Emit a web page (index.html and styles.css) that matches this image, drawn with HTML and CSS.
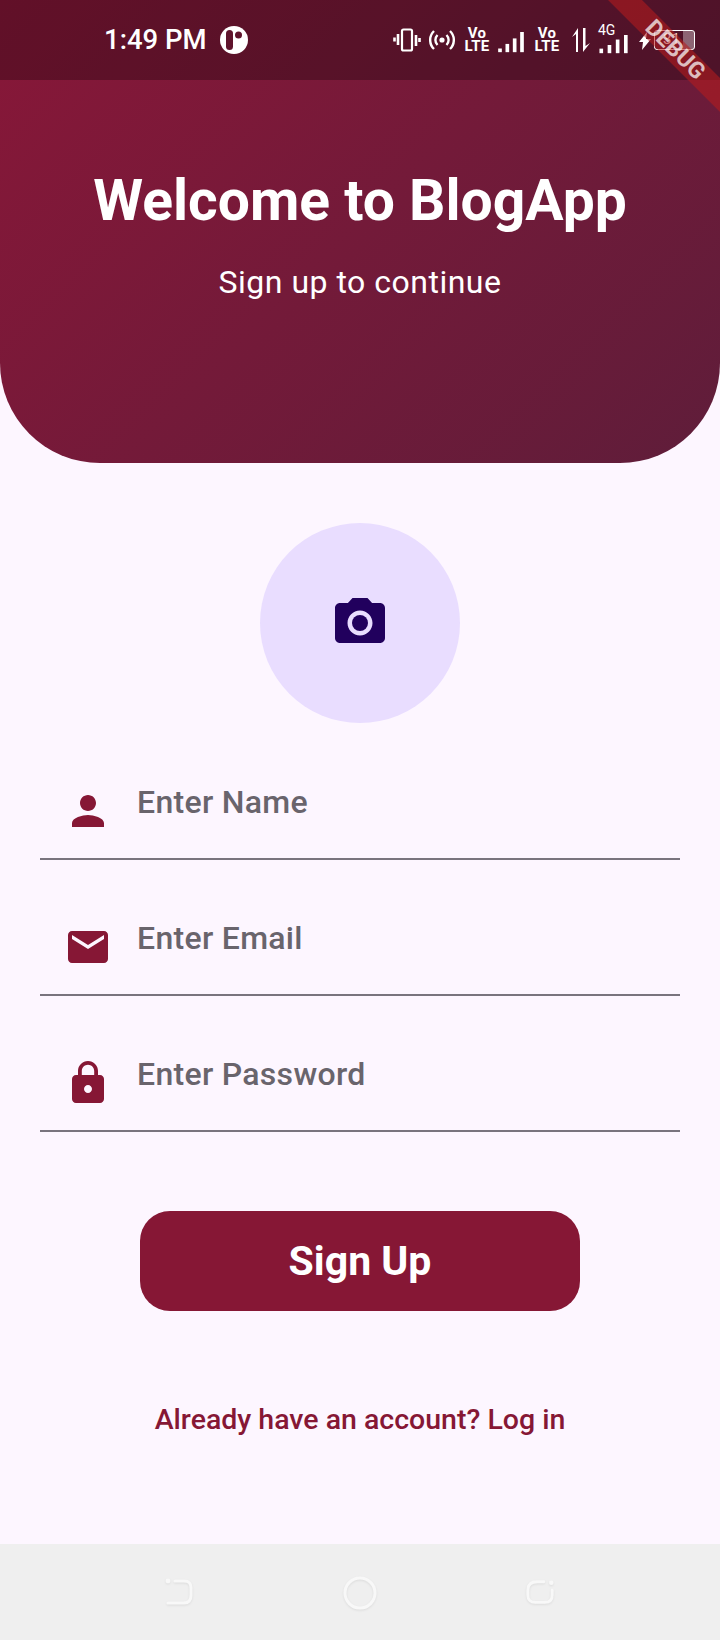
FILE: index.html
```html
<!DOCTYPE html>
<html lang="en">
<head>
<meta charset="utf-8">
<title>BlogApp Sign Up</title>
<link rel="stylesheet" href="styles.css">
</head>
<body>
<div class="page">
  <header class="hero">
    <div class="status">
      <div class="status-left">
        <span class="clock">1:49 PM</span>
        <svg class="app-dot" viewBox="0 0 28 28"><circle cx="14" cy="14" r="14" fill="#fff"/><rect x="6" y="4" width="7" height="20" rx="3.5" fill="#5f132c"/><circle cx="18.5" cy="9" r="3.5" fill="#5f132c"/></svg>
      </div>
      <div class="status-right">
        <svg class="i-vib" viewBox="0 0 28 24" fill="none" stroke="#fff"><rect x="9" y="1.500" width="10" height="21" rx="1.500" stroke-width="2.200"/><path d="M5 6v11M1.500 9.500v4M23 7v11M26.500 10v4" stroke-width="2.600"/></svg>
        <svg class="i-hot" viewBox="0 0 26 24" fill="none" stroke="#fff" stroke-width="2.400"><circle cx="13" cy="12" r="2.600" fill="#fff" stroke="none"/><path d="M8.500 7a7 7 0 0 0 0 10M17.500 7a7 7 0 0 1 0 10M5 3a12.500 12.500 0 0 0 0 18M21 3a12.500 12.500 0 0 1 0 18"/></svg>
        <div class="volte"><span>Vo</span><span>LTE</span></div>
        <svg class="i-sig" viewBox="0 0 28 24" fill="#fff"><rect x="0" y="18" width="4" height="4"/><rect x="8" y="13" width="4" height="9"/><rect x="16" y="7" width="4" height="15"/><rect x="24" y="0" width="4" height="22"/></svg>
        <div class="volte"><span>Vo</span><span>LTE</span></div>
        <svg class="i-arrows" viewBox="0 0 18 24" fill="#fff"><path d="M4 24V6L0 9 6 0v24zM11 0h2.500v18L18 15l-7 9z"/></svg>
        <div class="sig-4g">
          <span class="tag-4g">4G</span>
          <svg class="i-sig-small" viewBox="0 0 32 22" fill="#fff"><rect x="0" y="15" width="4" height="5"/><rect x="9" y="11" width="4" height="9"/><rect x="18" y="5" width="4" height="15"/><rect x="27" y="0" width="4" height="20"/></svg>
        </div>
        <svg class="i-bolt" viewBox="0 0 12 18" fill="#fff"><path d="M8 0 0 10h4l-1 8 9-11H7z"/></svg>
        <div class="battery"><span class="batt-level">31</span></div>
      </div>
    </div>
    <div class="hero-copy">
      <h1 class="title">Welcome to BlogApp</h1>
      <p class="subtitle">Sign up to continue</p>
    </div>
  </header>

  <main class="form">
    <div class="avatar">
      <svg class="camera" viewBox="0 0 24 24" fill="#21005d"><path d="M9 2 7.170 4H4c-1.100 0-2 .9-2 2v12c0 1.100.9 2 2 2h16c1.100 0 2-.9 2-2V6c0-1.100-.9-2-2-2h-3.170L15 2H9zm3 15c-2.760 0-5-2.240-5-5s2.240-5 5-5 5 2.240 5 5-2.240 5-5 5z"/><circle cx="12" cy="12" r="3.200"/></svg>
    </div>
    <div class="fields">
      <div class="field">
        <svg class="field-icon" viewBox="0 0 24 24"><path d="M12 12c2.210 0 4-1.790 4-4s-1.790-4-4-4-4 1.790-4 4 1.790 4 4 4zm0 2c-2.670 0-8 1.340-8 4v2h16v-2c0-2.660-5.330-4-8-4z"/></svg>
        <span class="hint">Enter Name</span>
      </div>
      <div class="field">
        <svg class="field-icon" viewBox="0 0 24 24"><path d="M20 4H4c-1.100 0-1.990.9-1.990 2L2 18c0 1.100.9 2 2 2h16c1.100 0 2-.9 2-2V6c0-1.100-.9-2-2-2zm0 4-8 5-8-5V6l8 5 8-5v2z"/></svg>
        <span class="hint">Enter Email</span>
      </div>
      <div class="field">
        <svg class="field-icon" viewBox="0 0 24 24"><path d="M18 8h-1V6c0-2.760-2.240-5-5-5S7 3.240 7 6v2H6c-1.100 0-2 .9-2 2v10c0 1.100.9 2 2 2h12c1.100 0 2-.9 2-2V10c0-1.100-.9-2-2-2zm-6 9c-1.100 0-2-.9-2-2s.9-2 2-2 2 .9 2 2-.9 2-2 2zm3.100-9H8.900V6c0-1.710 1.390-3.100 3.100-3.100 1.710 0 3.100 1.390 3.100 3.100v2z"/></svg>
        <span class="hint">Enter Password</span>
      </div>
    </div>
    <button class="signup" type="button">Sign Up</button>
    <a class="login" href="#">Already have an account? Log in</a>
  </main>

  <nav class="navbar">
    <svg class="nav-icon" viewBox="0 0 30 30"><circle cx="3" cy="3" r="2.400" class="dot"/><path d="M10 3h9c5 0 7 2 7 7v7c0 5-2 8-7 8H3" class="stroke"/></svg>
    <svg class="nav-icon nav-home" viewBox="0 0 34 34"><circle cx="17" cy="17" r="15" class="stroke"/></svg>
    <svg class="nav-icon" viewBox="0 0 32 30"><path d="M20 3H13C6 3 3 6 3 12v5c0 5 3 8 8 8h10c6 0 8-3 8-8v-5" class="stroke"/><circle cx="28" cy="4" r="2.400" class="dot"/></svg>
  </nav>

  <div class="debug-banner">DEBUG</div>
</div>
</body>
</html>
```
FILE: styles.css
```css
* { box-sizing: border-box; }
html, body { margin: 0; padding: 0; }
body { font-family: Roboto, "Noto Sans", sans-serif; }

.page {
  position: relative;
  width: 720px;
  height: 1640px;
  overflow: hidden;
  display: flex;
  flex-direction: column;
  background: #fdf6ff;
}

.hero {
  height: 463px;
  flex: none;
  background: linear-gradient(135deg, #881738 0%, #5f1d3a 100%);
  border-radius: 0 0 100px 100px;
  color: #fff;
}

.status {
  height: 80px;
  background: rgba(0, 0, 0, 0.28);
  display: flex;
  align-items: center;
  justify-content: space-between;
  padding: 0 25px 0 104px;
}
.status-left { display: flex; align-items: center; gap: 13px; }
.clock { font-size: 27.500px; font-weight: 500; line-height: 1; }
.app-dot { width: 28px; height: 28px; display: block; }
.status-right { display: flex; align-items: center; }
.status-right svg { display: block; flex: none; }

.i-vib { width: 28px; height: 24px; }
.i-hot { width: 26px; height: 24px; margin-left: 8px; }
.volte {
  display: flex;
  flex-direction: column;
  align-items: center;
  width: 26px;
  margin: 0 0 0 9px;
  font-size: 15px;
  font-weight: 700;
  line-height: 13.500px;
  letter-spacing: 0.3px;
}
.i-sig { width: 28px; height: 22px; margin: 6px 0 0 7px; }
.volte + .i-arrows { margin-left: 12px; }
.i-arrows { width: 18px; height: 24px; }
.sig-4g { position: relative; width: 32px; height: 30px; margin-left: 8px; }
.tag-4g { position: absolute; left: 0; top: -2px; font-size: 14px; font-weight: 400; line-height: 14px; }
.i-sig-small { position: absolute; left: 0; bottom: 0; width: 32px; height: 20px; }
.i-bolt { width: 12px; height: 18px; margin-left: 9px; margin-top: 2px; }
.battery {
  width: 41px;
  height: 20px;
  margin-left: 3px;
  border: 1.500px solid #fff;
  border-radius: 3px;
  background: linear-gradient(90deg, transparent 0 73%, rgba(255, 255, 255, 0.35) 73% 100%);
  font-size: 15px;
  line-height: 17px;
  text-align: center;
}
.batt-level { display: block; padding-right: 6px; }

.hero-copy { text-align: center; padding-top: 84px; }
.title { margin: 0; font-size: 57px; font-weight: 700; line-height: 74px; }
.subtitle { margin: 26px 0 0; font-size: 32px; font-weight: 400; line-height: 36px; letter-spacing: 0.5px; }

.form {
  flex: 1;
  display: flex;
  flex-direction: column;
  align-items: center;
  padding-top: 60px;
}
.avatar {
  width: 200px;
  height: 200px;
  border-radius: 50%;
  background: #e9ddff;
  display: flex;
  align-items: center;
  justify-content: center;
}
.camera { width: 60px; height: 60px; display: block; }

.fields {
  width: 640px;
  margin-top: 1px;
  display: flex;
  flex-direction: column;
}
.field {
  height: 136px;
  border-bottom: 2px solid #79747e;
  display: flex;
  align-items: flex-end;
  padding-left: 24px;
}
.field-icon { width: 48px; height: 48px; fill: #861735; margin-bottom: 23px; flex: none; }
.hint {
  font-size: 32px;
  font-weight: 500;
  line-height: 36px;
  color: #69646c;
  margin: 0 0 38px 25px;
  letter-spacing: 0.3px;
}

.signup {
  width: 440px;
  height: 100px;
  margin-top: 79px;
  border: 0;
  border-radius: 30px;
  background: #861735;
  color: #fff;
  font-family: inherit;
  font-size: 41px;
  font-weight: 700;
}
.login {
  margin-top: 91px;
  font-size: 28.500px;
  font-weight: 500;
  line-height: 36px;
  color: #861735;
  text-decoration: none;
}

.navbar {
  height: 96px;
  flex: none;
  background: #efefef;
  display: flex;
  align-items: center;
  justify-content: center;
  gap: 148px;
  padding-top: 2px;
}
.nav-icon { width: 30px; height: 30px; display: block; filter: drop-shadow(0 1px 1px rgba(0,0,0,.08)); }
.nav-home { width: 34px; height: 34px; }
.nav-icon .stroke { fill: none; stroke: #f8f8f8; stroke-width: 3; stroke-linecap: round; }
.nav-icon .dot { fill: #f8f8f8; }

.debug-banner {
  position: absolute;
  left: 575px;
  top: 38px;
  width: 200px;
  height: 24px;
  transform: rotate(45deg);
  background: rgba(183, 28, 28, 0.56);
  color: rgba(255, 255, 255, 0.72);
  font-size: 23px;
  font-weight: 700;
  line-height: 24px;
  text-align: center;
}
```
